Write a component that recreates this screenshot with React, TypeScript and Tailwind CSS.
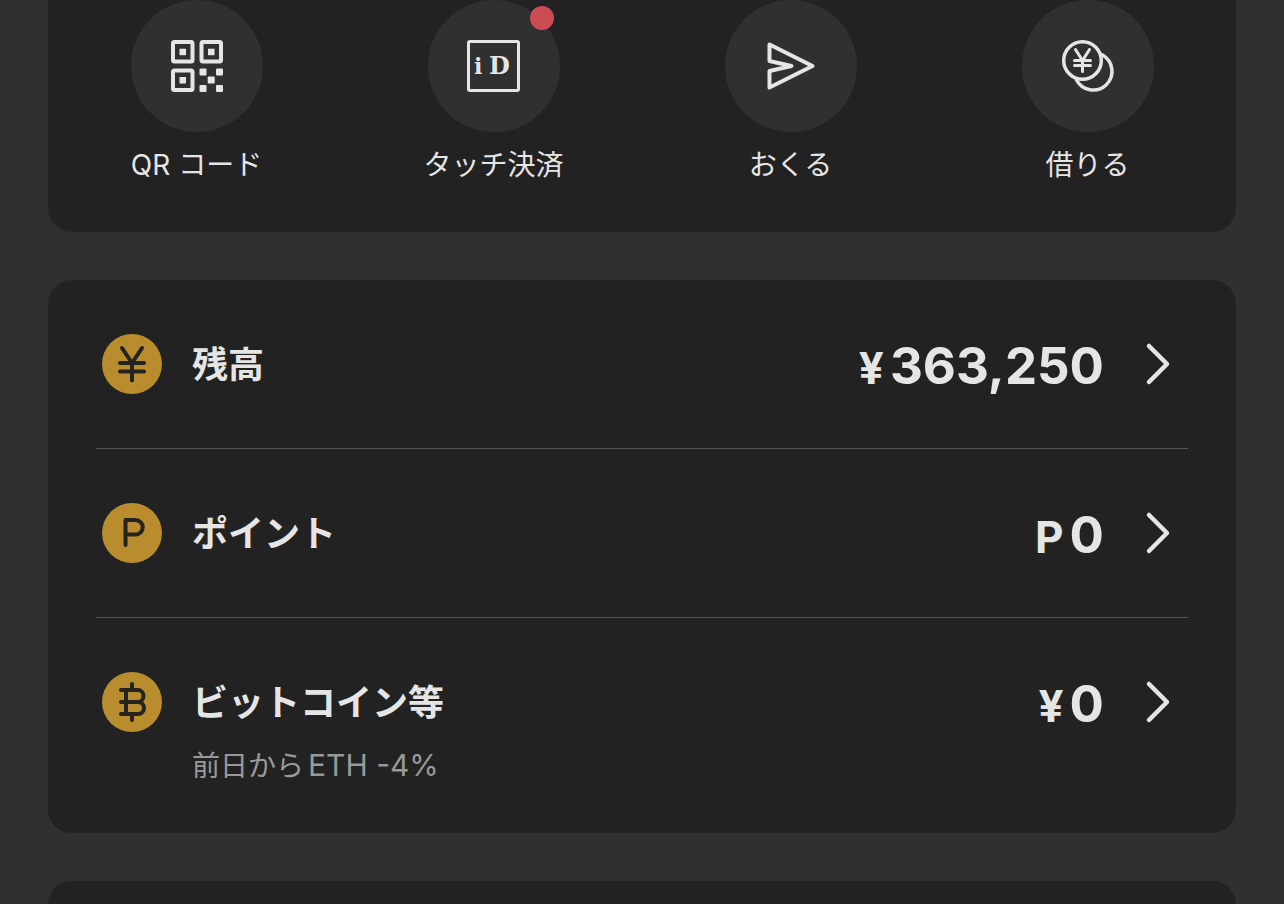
import React from "react";

const actions = [
  {
    label: "QR コード",
    badge: false,
    icon: (
      <svg width="132" height="132" viewBox="0 0 132 132" fill="none" aria-hidden="true">
        <g stroke="#e5e5e5" strokeWidth="4">
          <rect x="42" y="42" width="19.5" height="19.5" rx="1.5" />
          <rect x="70.5" y="42" width="19.5" height="19.5" rx="1.5" />
          <rect x="42" y="70.5" width="19.5" height="19.5" rx="1.5" />
        </g>
        <g fill="#e5e5e5">
          <rect x="48.5" y="48.7" width="6.5" height="6.5" />
          <rect x="77" y="48.7" width="6.5" height="6.5" />
          <rect x="48.5" y="77" width="6.5" height="6.5" />
          <rect x="68.5" y="68.5" width="7" height="7" rx="1" />
          <rect x="85" y="68.5" width="7" height="7" rx="1" />
          <rect x="76.7" y="76.5" width="7" height="7" rx="1" />
          <rect x="68.5" y="85" width="7" height="7" rx="1" />
          <rect x="85" y="85" width="7" height="7" rx="1" />
        </g>
      </svg>
    ),
  },
  {
    label: "タッチ決済",
    badge: true,
    icon: (
      <svg width="132" height="132" viewBox="0 0 132 132" fill="none" aria-hidden="true">
        <rect x="40.5" y="41.5" width="50" height="49" rx="1.5" stroke="#e5e5e5" strokeWidth="3" />
        <g fill="#e5e5e5" fontFamily="DejaVu Serif, serif" fontWeight="700">
          <text x="46" y="74" fontSize="22">
            i
          </text>
          <text x="61" y="74" fontSize="24">
            D
          </text>
        </g>
      </svg>
    ),
  },
  {
    label: "おくる",
    badge: false,
    icon: (
      <svg width="132" height="132" viewBox="0 0 132 132" fill="none" aria-hidden="true">
        <path
          d="M44.5 44.5L87.5 66L44.5 87.5V71L66.5 66L44.5 61Z"
          stroke="#e5e5e5"
          strokeWidth="4"
          strokeLinejoin="round"
        />
      </svg>
    ),
  },
  {
    label: "借りる",
    badge: false,
    icon: (
      <svg width="132" height="132" viewBox="0 0 132 132" fill="none" aria-hidden="true">
        <g stroke="#e5e5e5" strokeWidth="3.5" strokeLinecap="round">
          <circle cx="60.5" cy="60.5" r="18.8" />
          <path d="M80.5 54.9A18.8 18.8 0 1 1 54.3 79.5" />
          <path
            strokeWidth="3"
            d="M53.5 49.5L60.5 60.5L67.5 49.5M60.5 60.5V71.5M52.5 60.5H68.5M52.5 65.5H68.5"
          />
        </g>
      </svg>
    ),
  },
];

const balances = [
  {
    title: "残高",
    unit: "¥",
    amount: "363,250",
    note: null,
    icon: <path d="M20 14L30 29L40 14M30 29V46.5M18 29H42M18 37.5H42" />,
  },
  {
    title: "ポイント",
    unit: "P",
    amount: "0",
    note: null,
    icon: <path d="M23.5 42V17H33.5A7 7 0 0 1 33.5 31.5H23.5" />,
  },
  {
    title: "ビットコイン等",
    unit: "¥",
    amount: "0",
    note: { prefix: "前日から", change: "ETH -4%" },
    icon: (
      <path d="M19 18H36A5.5 6 0 0 1 36 30H19M36 30A6 6 0 0 1 36 42H19M24 18V42M30 12V18M30 42V48" />
    ),
  },
];

const ActionMenu = () => (
  <section className="grid grid-cols-4 rounded-b-3xl bg-[#222222] pb-12">
    {actions.map((action) => (
      <button
        key={action.label}
        type="button"
        className="flex cursor-pointer flex-col items-center gap-3.5"
      >
        <span className="relative size-33 rounded-full bg-[#303030]">
          {action.icon}
          {action.badge && (
            <span className="absolute top-1.5 right-1.5 size-6 rounded-full bg-[#cc4c54]"></span>
          )}
        </span>
        <span className="text-[28px] leading-[38px]">{action.label}</span>
      </button>
    ))}
  </section>
);

const BalanceList = () => (
  <section className="divide-y divide-[#555555] rounded-3xl bg-[#222222] px-12">
    {balances.map((item) => (
      <button
        key={item.title}
        type="button"
        className="block w-full cursor-pointer py-12 pr-4 pl-1.5 text-left"
      >
        <span className="flex h-18 items-center">
          <svg width="60" height="60" viewBox="0 0 60 60" fill="none" aria-hidden="true">
            <circle cx="30" cy="30" r="30" fill="#b98d2d" />
            <g stroke="#24231f" strokeWidth="4" strokeLinecap="round" strokeLinejoin="round">
              {item.icon}
            </g>
          </svg>
          <span className="mt-0.5 ml-7.5 text-4xl font-bold">{item.title}</span>
          <span className="mt-1 ml-auto flex items-baseline gap-1.5 font-bold">
            <span className="text-[44px]">{item.unit}</span>
            <span className="text-[51px]">{item.amount}</span>
          </span>
          <svg
            className="ml-10"
            width="28"
            height="44"
            viewBox="0 0 28 44"
            fill="none"
            aria-hidden="true"
          >
            <path
              d="M5 4L23 22L5 40"
              stroke="#e5e5e5"
              strokeWidth="4.5"
              strokeLinecap="round"
              strokeLinejoin="round"
            />
          </svg>
        </span>
        {item.note && (
          <span className="mt-2 ml-22.5 flex h-[39px] items-baseline gap-1 text-[28px] leading-[39px] text-[#999999]">
            {item.note.prefix}
            <span className="text-3xl leading-[39px]">{item.note.change}</span>
          </span>
        )}
      </button>
    ))}
  </section>
);

const App = () => {
  return (
    <main
      lang="ja"
      className="flex min-h-screen flex-col gap-12 bg-[#303030] px-12 font-[Inter,'Noto_Sans_CJK_JP',sans-serif] text-[#e5e5e5]"
    >
      <ActionMenu />
      <BalanceList />
      {/* Top of the next card */}
      <section className="flex-1 rounded-t-3xl bg-[#222222]"></section>
    </main>
  );
};

export default App;
